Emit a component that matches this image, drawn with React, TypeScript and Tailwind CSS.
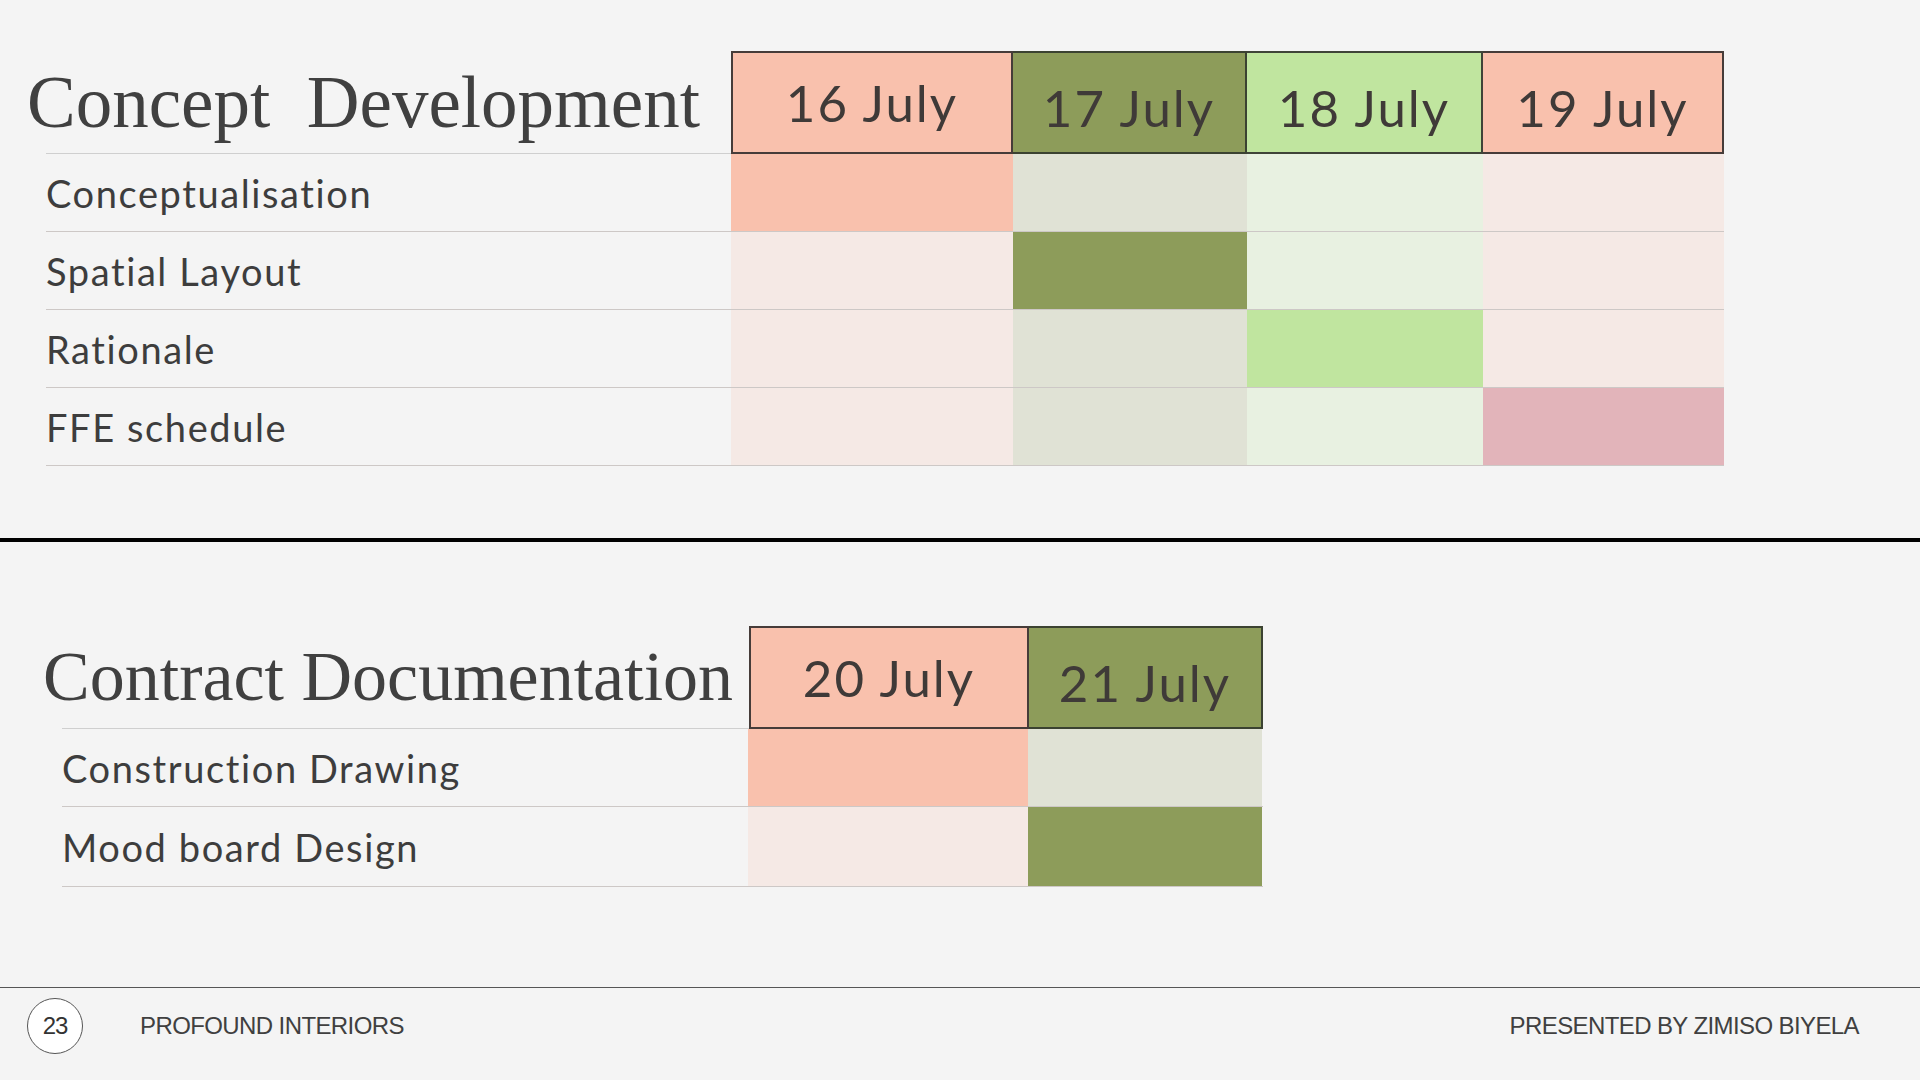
import React from "react";

type Col = {
  label: string;
  width: string;
  head: string;
  border: string;
  pale: string;
  on: string;
  drop?: boolean;
};

type Row = { label: string; active: number; height: string };

const conceptCols: Col[] = [
  { label: "16 July", width: "w-[282px]", head: "bg-[#f9c1ad]", border: "border-[#463c39]", pale: "bg-[#f5e9e5]", on: "bg-[#f9c1ad]" },
  { label: "17 July", width: "w-[234px]", head: "bg-[#8d9c5a]", border: "border-[#3b4231]", pale: "bg-[#e0e2d5]", on: "bg-[#8d9c5a]", drop: true },
  { label: "18 July", width: "w-[236px]", head: "bg-[#c0e59f]", border: "border-[#3f4438]", pale: "bg-[#e8f1e1]", on: "bg-[#c0e59f]", drop: true },
  { label: "19 July", width: "w-[241px]", head: "bg-[#f9c1ad]", border: "border-[#463c39]", pale: "bg-[#f5e9e5]", on: "bg-[#e2b4ba]", drop: true },
];

const conceptRows: Row[] = [
  { label: "Conceptualisation", active: 0, height: "h-[77px]" },
  { label: "Spatial Layout", active: 1, height: "h-[77px]" },
  { label: "Rationale", active: 2, height: "h-[77px]" },
  { label: "FFE schedule", active: 3, height: "h-[77px]" },
];

const contractCols: Col[] = [
  { label: "20 July", width: "w-[280px]", head: "bg-[#f9c1ad]", border: "border-[#463c39]", pale: "bg-[#f5e9e5]", on: "bg-[#f9c1ad]" },
  { label: "21 July", width: "w-[234px]", head: "bg-[#8d9c5a]", border: "border-[#3b4231]", pale: "bg-[#e0e2d5]", on: "bg-[#8d9c5a]", drop: true },
];

const contractRows: Row[] = [
  { label: "Construction Drawing", active: 0, height: "h-[77px]" },
  { label: "Mood board Design", active: 1, height: "h-[79px]" },
];

const serif = "font-['Liberation_Serif',serif]";
const sans = "font-['Lato','Open_Sans',sans-serif]";

function Schedule({
  title,
  titleSize,
  titleWidth,
  labelWidth,
  cols,
  rows,
}: {
  title: string;
  titleSize: string;
  titleWidth: string;
  labelWidth: string;
  cols: Col[];
  rows: Row[];
}) {
  return (
    <div className="flex flex-col w-fit">
      {/* header */}
      <div className="flex h-[103px]">
        <div className={`${titleWidth} flex flex-col`}>
          <div className="flex-1 flex items-center -ml-[2px]">
            <span className={`${serif} ${titleSize} leading-none text-[#404040] whitespace-pre`}>{title}</span>
          </div>
          <div className="ml-[17px] border-b border-[#cfcfcf]" />
        </div>
        {cols.map((c, i) => (
          <div
            key={c.label}
            className={`${c.width} ${c.head} ${c.border} border-y-2 border-r-2 ${i === 0 ? "border-l-2" : ""} flex items-center justify-center ${c.drop ? "pt-[10px]" : ""}`}
          >
            <span className={`${sans} text-[51px] leading-none tracking-[2px] text-[#3f3a38]`}>{c.label}</span>
          </div>
        ))}
      </div>

      {/* rows */}
      {rows.map((r) => (
        <div key={r.label} className="ml-[17px] flex border-b border-[#cdc8c6]">
          <div className={`${labelWidth} ${r.height} flex items-center`}>
            <span className={`${sans} text-[38px] leading-none tracking-[1.6px] text-[#3d3d3d]`}>{r.label}</span>
          </div>
          {cols.map((c, i) => (
            <div key={c.label} className={`${c.width} ${r.height} ${i === r.active ? c.on : c.pale}`} />
          ))}
        </div>
      ))}
    </div>
  );
}

export default function App() {
  return (
    <div className="w-[1920px] h-[1080px] bg-[#f4f4f4] flex flex-col overflow-hidden">
      <div className="pt-[51px] pl-[29px]">
        <Schedule
          title="Concept  Development"
          titleSize="text-[73px]"
          titleWidth="w-[702px]"
          labelWidth="w-[685px]"
          cols={conceptCols}
          rows={conceptRows}
        />
      </div>

      <div className="mt-[72px] h-[4px] bg-black" />

      <div className="mt-[84px] pl-[45px]">
        <Schedule
          title="Contract Documentation"
          titleSize="text-[70px]"
          titleWidth="w-[704px]"
          labelWidth="w-[686px]"
          cols={contractCols}
          rows={contractRows}
        />
      </div>

      <div className="flex-1" />

      <footer className="h-[93px] border-t border-[#555555] flex items-start pt-[10px] pl-[27px] pr-[61px]">
        <div className="w-14 h-14 rounded-full border border-[#555555] bg-white flex items-center justify-center">
          <span className="font-['Liberation_Sans',sans-serif] text-[24px] tracking-[-1px] text-[#333333]">23</span>
        </div>
        <div className="ml-[57px] h-14 flex items-center">
          <span className="font-['Liberation_Sans',sans-serif] text-[24px] tracking-[-0.6px] text-[#404040]">PROFOUND INTERIORS</span>
        </div>
        <div className="ml-auto h-14 flex items-center">
          <span className="font-['Liberation_Sans',sans-serif] text-[24px] tracking-[-0.6px] text-[#404040]">PRESENTED BY ZIMISO BIYELA</span>
        </div>
      </footer>
    </div>
  );
}
